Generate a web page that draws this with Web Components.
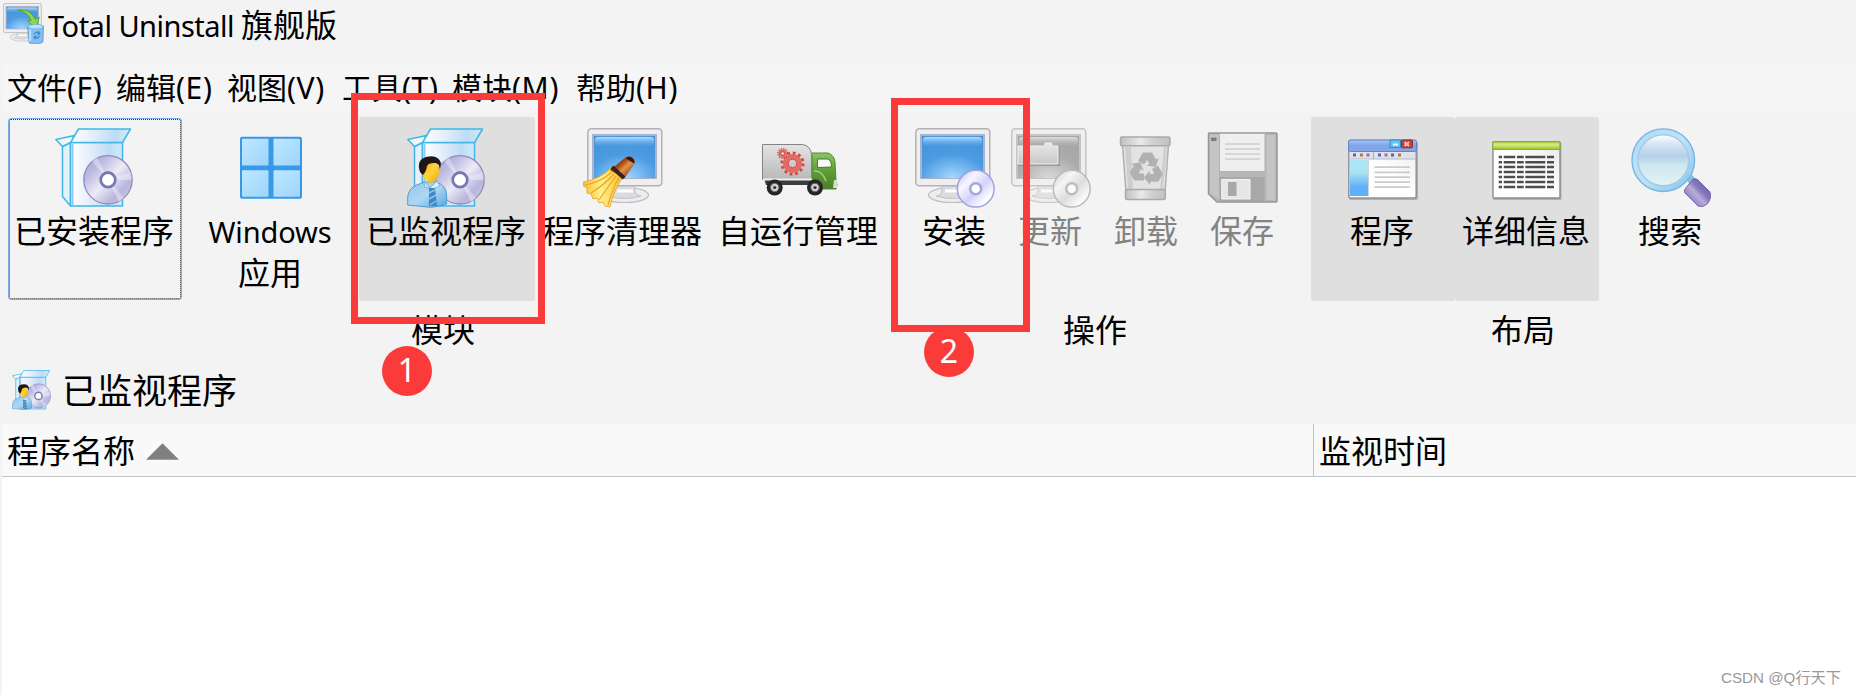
<!DOCTYPE html>
<html lang="zh-CN">
<head>
<meta charset="utf-8">
<title>Total Uninstall 旗舰版</title>
<style>
    html, body {
        margin: 0;
        height: 100%;
    }

    body {
        font-family: "Noto Sans", "Noto Sans CJK SC", sans-serif;
        color: #000;
        background: #f3f3f3;
        overflow: hidden;
    }

    .latin {
        font-size: 29px;
        letter-spacing: -0.1px;
    }
</style>
</head>
<body>
<app-window>
    <title-bar slot="title"><span class="latin" style="letter-spacing:-0.5px">Total Uninstall </span>旗舰版</title-bar>

    <menu-bar slot="menu">
        <menu-entry key="F" width="109">文件</menu-entry>
        <menu-entry key="E" width="111">编辑</menu-entry>
        <menu-entry key="V" width="115">视图</menu-entry>
        <menu-entry key="T" width="110">工具</menu-entry>
        <menu-entry key="M" width="124">模块</menu-entry>
        <menu-entry key="H" width="110">帮助</menu-entry>
    </menu-bar>

    <tool-group slot="tools" label="模块" style="--tool-width:176px">
        <tool-button icon="installed" focused>已安装程序</tool-button>
        <tool-button icon="windows"><span class="latin">Windows</span><br>应用</tool-button>
        <tool-button icon="monitored" checked>已监视程序</tool-button>
        <tool-button icon="cleaner">程序清理器</tool-button>
        <tool-button icon="autorun">自运行管理</tool-button>
    </tool-group>
    <tool-group slot="tools" label="操作" style="--tool-width:96px">
        <tool-button icon="install">安装</tool-button>
        <tool-button icon="update" disabled>更新</tool-button>
        <tool-button icon="uninstall" disabled>卸载</tool-button>
        <tool-button icon="save" disabled>保存</tool-button>
    </tool-group>
    <tool-group slot="tools" label="布局" style="--tool-width:144px">
        <tool-button icon="program" checked>程序</tool-button>
        <tool-button icon="details" checked>详细信息</tool-button>
        <tool-button icon="search">搜索</tool-button>
    </tool-group>

    <section-title slot="section">已监视程序</section-title>
    <program-table slot="content">
        <span slot="name">程序名称</span>
        <span slot="time">监视时间</span>
    </program-table>
</app-window>

<step-badge style="left:382px;top:346px">1</step-badge>
<step-badge style="left:924px;top:327px">2</step-badge>
<mark-box style="left:351px;top:93px;width:194px;height:231px"></mark-box>
<mark-box style="left:891px;top:98px;width:139px;height:234px"></mark-box>
<water-mark>CSDN @Q行天下</water-mark>

<script>
const DEFS = `
    <defs>
        <linearGradient id="front"><stop offset="0" stop-color="#fff"/><stop offset=".35" stop-color="#e6effa"/><stop offset=".75" stop-color="#bddcf4"/><stop offset="1" stop-color="#d3ebfa"/></linearGradient>
        <linearGradient id="disc" x1="0" y1="0" x2="1" y2="1"><stop offset="0" stop-color="#aaa5d2"/><stop offset=".25" stop-color="#bdb9e0"/><stop offset=".5" stop-color="#ecebf6"/><stop offset=".75" stop-color="#b9b5dd"/><stop offset="1" stop-color="#d6d4ea"/></linearGradient>
        <linearGradient id="shiny" x1="0" y1="0" x2="1" y2="1"><stop offset="0" stop-color="#bdbdf0"/><stop offset=".3" stop-color="#f6f6ff"/><stop offset=".55" stop-color="#d2d2f7"/><stop offset=".8" stop-color="#fff"/><stop offset="1" stop-color="#b9b9ec"/></linearGradient>
        <radialGradient id="screen" cx=".5" cy="1" r=".85"><stop offset="0" stop-color="#a6d9ff"/><stop offset=".65" stop-color="#4d9ce2"/><stop offset="1" stop-color="#4696de"/></radialGradient>
        <linearGradient id="gloss" x2="0" y2="1"><stop offset="0" stop-color="#b9dbff"/><stop offset="1" stop-color="#5ba8ea" stop-opacity=".2"/></linearGradient>
        <linearGradient id="pane" x1="0" y1="0" x2="1" y2="1"><stop offset="0" stop-color="#c0e8ff"/><stop offset="1" stop-color="#9cd4fc"/></linearGradient>
        <linearGradient id="face" x2="1" y2="1"><stop offset="0" stop-color="#f19a08"/><stop offset=".5" stop-color="#ffd23a"/><stop offset="1" stop-color="#f0a90c"/></linearGradient>
        <linearGradient id="shirt" x2="1" y2="1"><stop offset="0" stop-color="#8cc6f1"/><stop offset=".5" stop-color="#afd7f3"/><stop offset="1" stop-color="#5aa4dc"/></linearGradient>
        <linearGradient id="fan"><stop offset="0" stop-color="#ffbe32"/><stop offset=".45" stop-color="#fff08a"/><stop offset="1" stop-color="#ffc02e"/></linearGradient>
        <linearGradient id="wood" x1="0" y1="0" x2="1" y2="1"><stop offset="0" stop-color="#2d1c18"/><stop offset=".4" stop-color="#a64d17"/><stop offset=".55" stop-color="#e89046"/><stop offset="1" stop-color="#38201a"/></linearGradient>
        <linearGradient id="cargo" x2="0" y2="1"><stop offset="0" stop-color="#e4e4e4"/><stop offset="1" stop-color="#b8b8b8"/></linearGradient>
        <linearGradient id="cab" x2="0" y2="1"><stop offset="0" stop-color="#8cc36a"/><stop offset=".5" stop-color="#5f9d34"/><stop offset="1" stop-color="#497f28"/></linearGradient>
        <linearGradient id="metal"><stop offset="0" stop-color="#adadad"/><stop offset=".4" stop-color="#e6e6e6"/><stop offset=".65" stop-color="#c4c4c4"/><stop offset="1" stop-color="#adadad"/></linearGradient>
        <linearGradient id="bar" x2="0" y2="1"><stop offset="0" stop-color="#a9c6f7"/><stop offset=".5" stop-color="#7ba4e8"/><stop offset="1" stop-color="#89a6e4"/></linearGradient>
        <linearGradient id="side" x2="0" y2="1"><stop offset="0" stop-color="#ace8f4"/><stop offset=".35" stop-color="#a8e4f4"/><stop offset=".75" stop-color="#60b0f7"/></linearGradient>
        <linearGradient id="paper" x1="0" y1="1" x2="1" y2="0"><stop offset="0" stop-color="#fff"/><stop offset=".5" stop-color="#fff"/><stop offset="1" stop-color="#e9e9e9"/></linearGradient>
        <linearGradient id="green" x2="0" y2="1"><stop offset="0" stop-color="#b0d543"/><stop offset=".4" stop-color="#d7ec80"/><stop offset="1" stop-color="#98c322"/></linearGradient>
        <linearGradient id="lens" x2="0" y2="1"><stop offset="0" stop-color="#fff"/><stop offset=".2" stop-color="#d4e3f3"/><stop offset=".42" stop-color="#b4d0ea"/><stop offset=".6" stop-color="#cfe7f0"/><stop offset="1" stop-color="#e2f4f5"/></linearGradient>
        <linearGradient id="rim" x2="1" y2="1"><stop offset="0" stop-color="#b0dcf5"/><stop offset=".5" stop-color="#bde2f8"/><stop offset="1" stop-color="#86c1eb"/></linearGradient>
        <linearGradient id="grip" x1="0" y1="1" x2="1" y2="0"><stop offset="0" stop-color="#6558a6"/><stop offset=".45" stop-color="#b8add9"/><stop offset=".6" stop-color="#8478bb"/><stop offset="1" stop-color="#6155a1"/></linearGradient>
    </defs>`;

const BOX = `
    <g stroke="#42b7e5" stroke-width="1.5" stroke-linejoin="round">
        <path fill="#e4f0fb" d="M7.5 18.5 15.5 14.5V78L7.5 68.5z"/>
        <path fill="url(#front)" d="M15.5 14.5H67.5V78H15.5z"/>
        <path fill="url(#front)" d="M23.5 1H75.5L67.5 14.5H15.5z"/>
        <path fill="#eef7fb" d="M.8 11.5 19.5 7.5 15.5 14.5 7.5 18.5z"/>
    </g>
    <path d="M17.5 16v61" stroke="#8acdf1" stroke-width="2"/>`;

const DISC = `
    <circle cx="53" cy="51.8" r="24.2" fill="url(#disc)" stroke="#908bc3" stroke-width="1.3"/>
    <path d="M53 51.8 37 33l5-4zM53 51.8 69 70l-5 4zM53 51.8 76 44l1 8z" fill="#fff" opacity=".35"/>
    <circle cx="53" cy="51.8" r="7.3" fill="#fff" stroke="#7a77b4" stroke-width="2.8"/>`;

const MONITOR = `
    <ellipse cx="37.5" cy="67" rx="24" ry="7.5" fill="#ededee" stroke="#bcbcc0" stroke-width="1.2"/>
    <path d="M27 57h21v6q0 4 6 5-16 5-33 0 6-1 6-5z" fill="#dcdce0" stroke="#c2c2c6"/>
    <path d="M30 63h16" stroke="#fff" stroke-width="3"/>
    <rect x=".8" y=".8" width="74" height="57" rx="3.5" fill="#eeeef0" stroke="#b2b2b5" stroke-width="1.5"/>
    <path d="M5 6h65v45H5z" fill="#aab3c8"/>
    <path d="M7 8h61v42H7z" fill="url(#screen)"/>
    <rect x="8" y="9" width="59" height="9" rx="3" fill="url(#gloss)"/>`;

const SMALL_DISC = `
    <circle cx="60.7" cy="60.7" r="18.4" fill="url(#shiny)" stroke="#a2a1d9" stroke-width="1.5"/>
    <circle cx="60.7" cy="60.7" r="5.5" fill="#fff" stroke="#a8a7dc" stroke-width="2.5"/>`;

// ring of short teeth around a hub
function gear(x, y, r) {
    return `<g fill="none" stroke="#cf4747">
        <circle cx="${x}" cy="${y}" r="${r}" stroke-width="${r * .3}" stroke-dasharray="${r * .26} ${r * .2634}"/>
        <circle cx="${x}" cy="${y}" r="${r * .67}" stroke="#e16b66" stroke-width="${r * .48}"/>
        <circle cx="${x}" cy="${y}" r="${r * .4}" stroke-width="1"/>
    </g>`;
}

function wheel(x) {
    return `<circle cx="${x}" cy="59.5" r="8" fill="#252525"/>
        <circle cx="${x}" cy="59.5" r="4.2" fill="#cfcfcf" stroke="#666"/>
        <circle cx="${x}" cy="59.5" r="1.6" fill="#333"/>`;
}

const detailRows = [29, 34.3, 39, 44, 49, 54, 59]
    .map(y => `<path d="M11.7 ${y}H15M16.7 ${y}H28.3M30 ${y}H36.7M38.3 ${y}H58.3M60 ${y}H67"/>`)
    .join("");

const recycleArrow = `<path d="M31 33 36 24.5h9l4 7 3-1.5-3.500 9-9-1.500 3-1.500-2.500-4-3 4.500z"/>`;

const ICONS = {
    installed: BOX + DISC,

    windows: `
        <rect x="9" y="8.8" width="62" height="62" rx="2" fill="#3799e8"/>
        <g fill="url(#pane)">
            <rect x="11" y="10.8" width="26.5" height="26.8" rx=".8"/><rect x="42.5" y="10.8" width="26.5" height="26.8" rx=".8"/>
            <rect x="11" y="42.3" width="26.5" height="26.5" rx=".8"/><rect x="42.5" y="42.3" width="26.5" height="26.5" rx=".8"/>
        </g>`,

    monitored: BOX + DISC + `
        <path d="M.7 77V69q1-9 9-12l8-3h11q11 3 11 14v8q-12 4-20 3T.7 77z" fill="url(#shirt)" stroke="#4f9bd3"/>
        <path d="M17 53 23 60 30 53 33 58 26 61 18 59z" fill="#d9edfb" stroke="#68addd" stroke-width=".8"/>
        <path d="M22 60h6l2 18h-8z" fill="#3e88c6"/>
        <path d="M22 65l6-3M22 71l7-4M23 77l6-4" stroke="#8ac4ed" stroke-width="1.5"/>
        <path d="M15 38q2-6 9-6 9 1 8 13-2 8-8 10-8-2-9-11z" fill="url(#face)"/>
        <path d="M13 44q-4-12 6-15 12-3 15 6l-1 6q-1-7-6-6-6 0-7 3-1 6-4 9z" fill="#201715"/>`,

    cleaner: `<g transform="translate(4)">${MONITOR}</g>
        <path d="M28 40 39 50Q31 62 27 79L22 78 20 74 16 75 14 70 10 71 8 66 4 65 4 60 .5 58V54Q17 51 28 40z" fill="url(#fan)" stroke="#e2a127" stroke-width=".8"/>
        <path d="M29 44Q18 54 2 57M31 46Q21 57 8 65M33 48Q25 59 16 72M36 49Q30 60 25 77" stroke="#e5a72b" stroke-width="1.2" fill="none"/>
        <path d="M43 29q5-2 8 2 2 3-1 7L41 51 27 42z" fill="url(#wood)"/>
        <path d="M29 39l12 11" stroke="#3b2119" stroke-width="4"/>
        <path d="M43.500 29.500q5-2 7.500 2 1 2 0 4l-8-5z" fill="#2a1a18"/>`,

    autorun: `
        <path d="M5 50h50v7H7z" fill="#3c3c3c"/>
        <path d="M53 25h16q6 2 7 9l1 18q2 5 0 9H53z" fill="url(#cab)" stroke="#578733"/>
        <path d="M58.5 31h10q4 1 4 8l-14 .5z" fill="#f7faf7" stroke="#467c2b"/>
        <path d="M55 43q8-1 12 10" stroke="#a4cd87" stroke-width="1.5" fill="none"/>
        <path d="M75 52h3v8h-4z" fill="#d7ddd5"/>
        <path d="M3.5 16.5h40q8 1 9 10V51.5h-49z" fill="url(#cargo)" stroke="#848484"/>
        <path d="M4 51.5h49" stroke="#efefef" stroke-width="2"/>
        ${wheel(15.7)}${wheel(56)}${gear(33.5, 35.5, 10.5)}${gear(23.7, 25.5, 4.8)}`,

    install: MONITOR + SMALL_DISC,

    update: MONITOR + `
        <path d="M7 18h27v-3h8v3h7v20H7z" fill="#777"/>
        <path d="M7 18h27v-3h7v3h6v18H7z" fill="url(#cargo)" stroke="#eee"/>` + SMALL_DISC,

    uninstall: `
        <path d="M15.5 17h46L57.5 71h-38z" fill="#dedede" stroke="#979797" stroke-width="1.5"/>
        <path d="M18 19h6l2 43h-5zM57 19h3l-4 43h-3z" fill="#c1c1c1"/>
        <rect x="13.5" y="9" width="49.5" height="8.8" rx="1.5" fill="url(#metal)" stroke="#8f8f8f" stroke-width="1.5"/>
        <rect x="18.5" y="61.5" width="39.8" height="10" rx="1.5" fill="url(#metal)" stroke="#8f8f8f" stroke-width="1.5"/>
        <g fill="#999">${recycleArrow}<g transform="rotate(120 39.7 41)">${recycleArrow}</g><g transform="rotate(240 39.7 41)">${recycleArrow}</g></g>`,

    save: `
        <path d="M6 5h67q1 0 1 1v67q0 1-1 1H14L5.5 66V6z" fill="#a0a0a0" stroke="#757575" stroke-width="1.5"/>
        <path d="M7 7h9v64l-9-6zM63.5 7h8.5v65h-8.5z" fill="#b2b2b2"/>
        <path d="M16.5 5.5H62v38H16.5z" fill="#eee" stroke="#999"/>
        <path d="M22 16h35M22 21h35M22 26h35M22 31h35" stroke="#c0c0c0" stroke-width="1.5"/>
        <path d="M16.5 49h45v24h-45z" fill="#8c8c8c"/>
        <path d="M18.7 51.5H47V71H18.7z" fill="#e2e2e2" stroke="#f3f3f3"/>
        <path d="M25 54h8.5v14H25z" fill="#8c8c8c"/>
        <path d="M8 9.5h5.5v3.500H8z" fill="#505050"/>`,

    program: `
        <rect x="6" y="13.5" width="69" height="58.5" rx="2" fill="#777" opacity=".45"/>
        <rect x="5.8" y="12.5" width="67.4" height="57.4" rx="2" fill="url(#paper)" stroke="#909499" stroke-width="1.5"/>
        <rect x="5.5" y="12" width="68" height="11.5" rx="2" fill="url(#bar)" stroke="#6382c8" stroke-width="1"/>
        <path d="M7 24h65v7H7z" fill="#dfe1ec"/><path d="M7 31h65" stroke="#b5b7c0"/>
        <path d="M30.5 24v7" stroke="#aaa"/>
        <path d="M10 25.5h3v3h-3zM35 25.5h3v3h-3zM48 25.5h3v3h-3z" fill="#5a65a5"/>
        <path d="M17 25.5h3v3h-3zM55 25.5h3v3h-3z" fill="#ad7b4b"/>
        <path d="M23.5 25.5h3v3h-3zM41.5 25.5h3v3h-3z" fill="#9c749c"/>
        <path d="M7 32h18v36H7z" fill="url(#side)"/><path d="M25.5 32v36" stroke="#ccd5dc"/>
        <path d="M31.5 39.2H67M31.5 44.3H67M31.5 49.2H67M31.5 54.2H67M31.5 59.2H67" stroke="#cbcbcb" stroke-width="1.7"/>
        <rect x="47" y="12" width="10.5" height="7.5" fill="#63c5ef" stroke="#3588c6"/><path d="M50 16.500h5" stroke="#dff" stroke-width="2"/>
        <rect x="58.5" y="12" width="11" height="7.8" rx="1" fill="#c3413b" stroke="#9d2630"/><path d="M61.5 14l4.5 4M66 14l-4.5 4" stroke="#f5cdb6" stroke-width="1.8"/>`,

    details: `
        <rect x="6" y="15" width="68.5" height="57" rx="1" fill="#777" opacity=".45"/>
        <rect x="6" y="14" width="67" height="56" rx="1" fill="url(#paper)" stroke="#8c8c8c" stroke-width="1.4"/>
        <rect x="5.8" y="13.7" width="67.2" height="7.8" rx="1" fill="url(#green)" stroke="#87ad2c" stroke-width="1.2"/>
        <g stroke="#4d4d4d" stroke-width="2.4">${detailRows}</g>`,

    search: `
        <path d="M57 54l6-5" stroke="#86c1e5" stroke-width="6"/>
        <path d="M54 61 62 51q3-1 5 1l12 12q2 7-3 12-4 4-9 2L54 65q-1-2 0-4z" fill="url(#grip)" stroke="#7468ad"/>
        <circle cx="32.3" cy="32.2" r="31.3" fill="url(#rim)" stroke="#76b5df" stroke-width="1.3"/>
        <circle cx="32.3" cy="32.2" r="25.5" fill="url(#lens)" stroke="#a5cae6" stroke-width="1.5"/>`,

    app: MONITOR + `
        <path d="M28 14q24-5 35 18l8-4-6 21-18-14 8-1q-7-18-27-20z" fill="#8ed64a" stroke="#4d9b22" stroke-width="1.5"/>
        <path d="M48 46q16-7 31-1l-1 31q-9 7-27 2z" fill="#83bff2" stroke="#4f98df" stroke-width="1.5"/>
        <ellipse cx="63.5" cy="46" rx="14.5" ry="4" fill="#c2e3ff" stroke="#6facde"/>
        <path d="M53 52v22" stroke="#c0e1fc" stroke-width="4"/>
        <path d="M60 61q5-7 11-2M72 64q-4 7-11 3M69 55l3 5-6 1M62 71l-1-5 5-1" stroke="#3f84ce" stroke-width="2.2" fill="none"/>`
};

function define(name, html, setup) {
    customElements.define(name, class extends HTMLElement {
        constructor() {
            super();
            this.attachShadow({ mode: "open" });
            this.shadowRoot.innerHTML = html;
        }

        connectedCallback() {
            if (setup) setup(this, this.shadowRoot);
        }
    });
}

define("app-icon", `
    <style>
        :host { display: block; width: 80px; height: 80px; flex: none; }
        svg { display: block; width: 100%; height: 100%; }
    </style>
    <svg viewBox="0 0 80 80" fill="none"></svg>
`, (el, root) => {
    root.querySelector("svg").innerHTML = DEFS + ICONS[el.getAttribute("name")];
});

define("app-window", `
    <style>
        :host { display: flex; flex-direction: column; height: 695px; }
        .tools { display: flex; gap: 20px; height: 239px; padding: 5px 0 0 7px; box-sizing: border-box; }
    </style>
    <slot name="title"></slot>
    <slot name="menu"></slot>
    <div class="tools"><slot name="tools"></slot></div>
    <slot name="section"></slot>
    <slot name="content"></slot>
`);

define("title-bar", `
    <style>
        :host { display: flex; gap: 4px; height: 63px; padding-left: 3px; box-sizing: border-box; font-size: 32px; }
        app-icon { width: 41px; height: 41px; margin-top: 3px; }
        .text { line-height: 49px; white-space: pre; }
    </style>
    <app-icon name="app"></app-icon>
    <div class="text"><slot></slot></div>
`);

define("menu-bar", `
    <style>
        :host { display: flex; height: 49px; margin-left: 2px; padding-left: 5px; background: #f5f5f5; }
    </style>
    <slot></slot>
`);

define("menu-entry", `
    <style>
        :host { display: block; font-size: 30px; line-height: 49px; white-space: nowrap; }
        .key { font-size: 30px; letter-spacing: 0.6px; }
    </style>
    <slot></slot><span class="key"></span>
`, (el, root) => {
    el.style.width = el.getAttribute("width") + "px";
    root.querySelector(".key").textContent = `(${el.getAttribute("key")})`;
});

define("tool-group", `
    <style>
        :host { display: flex; flex-direction: column; }
        .buttons { display: flex; }
        .label { margin: 8px 8px 0 0; text-align: center; font-size: 32px; line-height: 41px; }
    </style>
    <div class="buttons"><slot></slot></div>
    <div class="label"></div>
`, (el, root) => {
    root.querySelector(".label").textContent = el.getAttribute("label");
});

define("tool-button", `
    <style>
        :host {
            display: flex;
            flex-direction: column;
            align-items: center;
            width: var(--tool-width);
            height: 184px;
            padding-top: 11px;
            box-sizing: border-box;
            border-radius: 3px;
        }
        :host([checked]) { background: #dfdfdf; }
        :host([focused]) {
            width: calc(var(--tool-width) - 2px);
            height: 182px;
            margin: 1px;
            padding-top: 9px;
            border: 1px solid #7fa9e3;
            outline: 1px dotted #333;
            outline-offset: -2px;
        }
        :host([disabled]) { color: #838383; }
        :host([disabled]) app-icon { filter: grayscale(1); opacity: .72; }
        .label { margin: 2px 2px 0 0; font-size: 32px; line-height: 41px; text-align: center; white-space: nowrap; }
    </style>
    <div class="icon"></div>
    <div class="label"><slot></slot></div>
`, (el, root) => {
    const icon = document.createElement("app-icon");
    icon.setAttribute("name", el.getAttribute("icon"));
    root.querySelector(".icon").replaceChildren(icon);
});

define("section-title", `
    <style>
        :host { display: flex; align-items: center; gap: 10px; height: 73px; padding: 5px 0 0 12px; box-sizing: border-box; font-size: 35px; }
        app-icon { width: 40px; height: 40px; }
        .text { line-height: 46px; padding-top: 2px; }
    </style>
    <app-icon name="monitored"></app-icon>
    <div class="text"><slot></slot></div>
`);

define("program-table", `
    <style>
        :host { display: flex; flex-direction: column; flex: 1; margin-left: 2px; background: #fff; }
        .head { display: flex; height: 53px; box-sizing: border-box; border-bottom: 1px solid #c3c3c3; background: #f9f9f9; font-size: 32px; line-height: 52px; }
        .cell { display: flex; align-items: center; gap: 11px; padding: 2px 0 0 5px; box-sizing: border-box; }
        .name { width: 1312px; border-right: 1px solid #c3c3c3; }
    </style>
    <div class="head">
        <div class="cell name"><slot name="name"></slot><svg width="33" height="17" viewBox="0 0 34 17"><path d="M0 17 17 0 34 17z" fill="#808080"/></svg></div>
        <div class="cell"><slot name="time"></slot></div>
    </div>
`);

define("mark-box", `
    <style>
        :host { display: block; position: absolute; box-sizing: border-box; border: 7px solid #fb3a3a; }
    </style>
`);

define("step-badge", `
    <style>
        :host { display: block; position: absolute; width: 50px; height: 50px; border-radius: 50%; background: #fb3a3a; color: #fff; font-size: 32px; line-height: 47px; text-align: center; }
    </style>
    <slot></slot>
`);

define("water-mark", `
    <style>
        :host { display: block; position: absolute; right: 15px; bottom: 5px; font: 15.2px/24px "Liberation Sans", "Noto Sans CJK SC", sans-serif; color: #999; white-space: nowrap; }
    </style>
    <slot></slot>
`);
</script>
</body>
</html>
